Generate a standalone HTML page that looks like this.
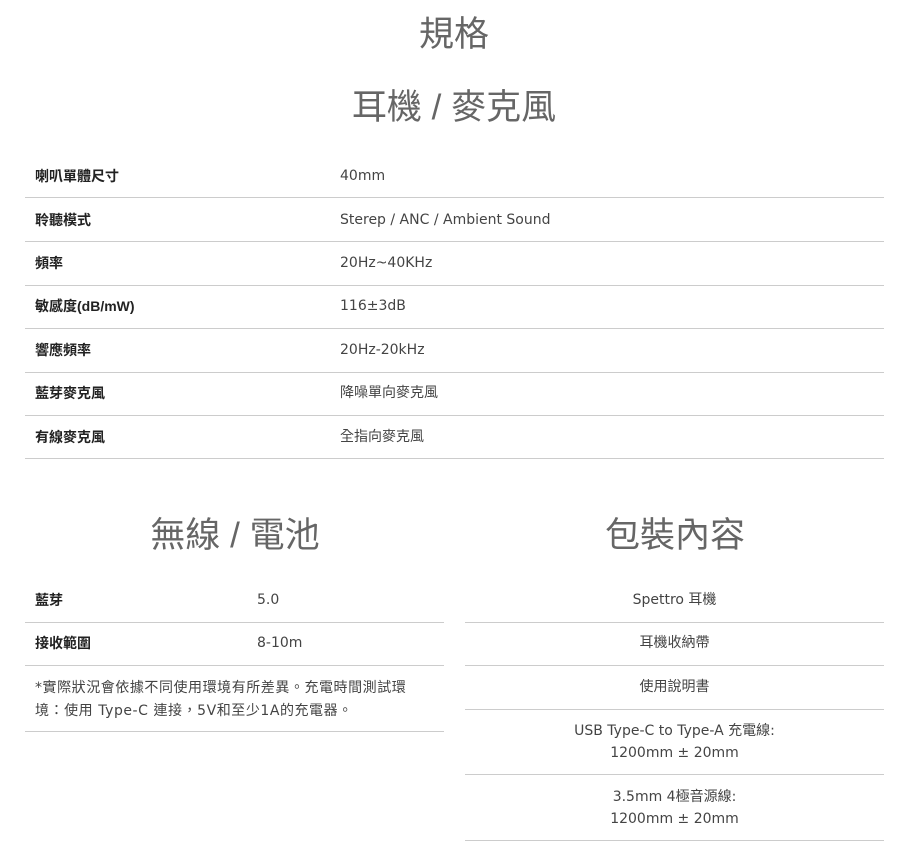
<!DOCTYPE html>
<html><head><meta charset="utf-8"><style>
body{margin:0;width:907px;height:852px;background:#fff;font-family:"DejaVu Sans","Noto Sans CJK TC",sans-serif;color:#333;position:relative;overflow:hidden}
.a{position:absolute;white-space:nowrap}
h1,h2{position:absolute;margin:0;font-weight:400;color:#666;font-size:35px;line-height:40px;transform:translateX(-50%);white-space:nowrap;font-family:"Liberation Sans","Noto Sans CJK TC",sans-serif}
.l{position:absolute;height:1px;background:#ccc}
.k{font-weight:bold;font-size:14px;color:#222;font-family:"Liberation Sans","Noto Sans CJK TC",sans-serif;line-height:18px;margin-top:1px}
.v{font-size:14px;color:#444;line-height:18px;margin-top:1px}
.c{font-size:14px;color:#444;text-align:center;width:419px;left:465px;line-height:22px;margin-top:1px}
</style></head><body>
<h1 style="left:454px;top:15px">規格</h1>
<h2 style="left:454px;top:88px">耳機 / 麥克風</h2>

<div class="a k" style="left:35px;top:166px">喇叭單體尺寸</div><div class="a v" style="left:340px;top:166px">40mm</div>
<div class="l" style="left:25px;width:859px;top:197px"></div>
<div class="a k" style="left:35px;top:210px">聆聽模式</div><div class="a v" style="left:340px;top:210px">Sterep / ANC / Ambient Sound</div>
<div class="l" style="left:25px;width:859px;top:241px"></div>
<div class="a k" style="left:35px;top:253px">頻率</div><div class="a v" style="left:340px;top:253px">20Hz~40KHz</div>
<div class="l" style="left:25px;width:859px;top:285px"></div>
<div class="a k" style="left:35px;top:296px">敏感度(dB/mW)</div><div class="a v" style="left:340px;top:296px">116±3dB</div>
<div class="l" style="left:25px;width:859px;top:328px"></div>
<div class="a k" style="left:35px;top:340px">響應頻率</div><div class="a v" style="left:340px;top:340px">20Hz-20kHz</div>
<div class="l" style="left:25px;width:859px;top:372px"></div>
<div class="a k" style="left:35px;top:383px">藍芽麥克風</div><div class="a v" style="left:340px;top:383px">降噪單向麥克風</div>
<div class="l" style="left:25px;width:859px;top:415px"></div>
<div class="a k" style="left:35px;top:427px">有線麥克風</div><div class="a v" style="left:340px;top:427px">全指向麥克風</div>
<div class="l" style="left:25px;width:859px;top:458px"></div>

<h2 style="left:235px;top:516px">無線 / 電池</h2>
<h2 style="left:675px;top:516px">包裝內容</h2>

<div class="a k" style="left:35px;top:590px">藍芽</div><div class="a v" style="left:257px;top:590px">5.0</div>
<div class="l" style="left:25px;width:419px;top:622px"></div>
<div class="a k" style="left:35px;top:633px">接收範圍</div><div class="a v" style="left:257px;top:633px">8-10m</div>
<div class="l" style="left:25px;width:419px;top:665px"></div>
<div class="a v" style="left:35px;top:676px;line-height:23px;letter-spacing:0.55px">*實際狀況會依據不同使用環境有所差異。充電時間測試環<br>境：使用 Type-C 連接，5V和至少1A的充電器。</div>
<div class="l" style="left:25px;width:419px;top:731px"></div>

<div class="a c" style="top:588px">Spettro 耳機</div>
<div class="l" style="left:465px;width:419px;top:622px"></div>
<div class="a c" style="top:631px">耳機收納帶</div>
<div class="l" style="left:465px;width:419px;top:665px"></div>
<div class="a c" style="top:675px">使用說明書</div>
<div class="l" style="left:465px;width:419px;top:709px"></div>
<div class="a c" style="top:719px">USB Type-C to Type-A 充電線:<br>1200mm ± 20mm</div>
<div class="l" style="left:465px;width:419px;top:774px"></div>
<div class="a c" style="top:785px">3.5mm 4極音源線:<br>1200mm ± 20mm</div>
<div class="l" style="left:465px;width:419px;top:840px"></div>
</body></html>
